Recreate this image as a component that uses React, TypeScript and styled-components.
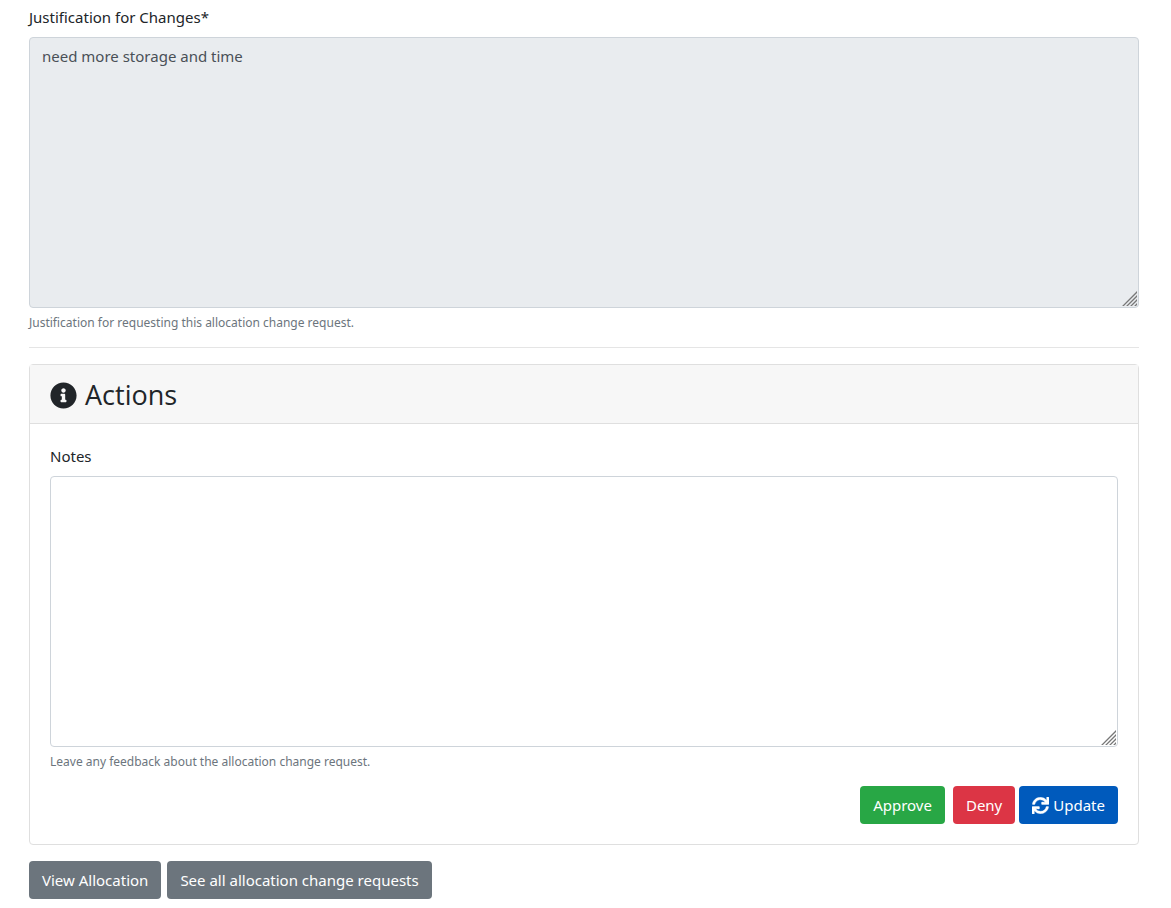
import React from 'react';
import styled, { createGlobalStyle } from 'styled-components';
import { FaInfoCircle, FaSync } from 'react-icons/fa';

const GlobalStyle = createGlobalStyle`
  *, *::before, *::after { box-sizing: border-box; }
  body {
    margin: 0;
    background: #fff;
    color: #212529;
    font-family: "Segoe UI", "Noto Sans", "Open Sans", sans-serif;
    font-size: 15px;
    line-height: 24px;
  }
`;

const Page = styled.main`
  padding: 5px 32px 9px 29px;
`;

const Field = styled.div`
  display: flex;
  flex-direction: column;
`;

const Label = styled.label`
  margin-bottom: 8px;
`;

const AreaWrap = styled.div`
  position: relative;
  display: flex;
`;

const Area = styled.textarea`
  width: 100%;
  height: 271px;
  padding: 6px 12px;
  border: 1px solid #ced4da;
  border-radius: 4px;
  background: #fff;
  color: #495057;
  font: inherit;
  resize: vertical;

  &:read-only { background: #e9ecef; }
  &::-webkit-resizer { display: none; }
`;

const Grip = styled.svg`
  position: absolute;
  right: 2px;
  bottom: 2px;
  pointer-events: none;
`;

const Help = styled.small`
  margin-top: 5px;
  color: #6c757d;
  font-size: 12px;
  line-height: 20px;
`;

const Divider = styled.hr`
  margin: 14px 0 16px;
  border: 0;
  border-top: 1px solid #e5e5e5;
`;

const Card = styled.section`
  border: 1px solid #dfdfdf;
  border-radius: 4px;
`;

const CardHeader = styled.header`
  padding: 13px 20px 11px;
  border-bottom: 1px solid #dfdfdf;
  background: #f7f7f7;
`;

const Title = styled.h2`
  display: flex;
  align-items: center;
  gap: 8px;
  margin: 0;
  font-family: "Segoe UI", "Open Sans", sans-serif;
  font-size: 27px;
  font-weight: 400;
  line-height: 34px;
`;

const CardBody = styled.div`
  padding: 20px;
`;

const Actions = styled.div`
  display: flex;
  justify-content: flex-end;
  gap: 4px;
  margin-top: 14px;
`;

const tones = {
  success: '#28a745',
  danger: '#dc3545',
  primary: '#005abc',
  secondary: '#6c757d',
};

const Button = styled.button<{ $tone: keyof typeof tones; $spaced?: boolean }>`
  display: inline-flex;
  align-items: center;
  gap: 4px;
  margin: 0 ${(p) => (p.$spaced ? '4px' : '0')} 0 0;
  padding: 7px 13px;
  border: 0;
  border-radius: 4px;
  background: ${(p) => tones[p.$tone]};
  color: #fff;
  font: inherit;
  text-decoration: none;
  white-space: nowrap;
  cursor: pointer;
`;

const SyncIcon = styled(FaSync)`
  stroke: currentColor;
  stroke-width: 12px;
`;

const Links = styled.nav`
  display: flex;
  flex-wrap: wrap;
  gap: 6px;
  margin-top: 16px;
`;

type TextFieldProps = {
  id: string;
  label: string;
  help: string;
  value?: string;
  readOnly?: boolean;
};

function TextField({ id, label, help, value, readOnly }: TextFieldProps) {
  return (
    <Field>
      <Label htmlFor={id}>{label}</Label>
      <AreaWrap>
        <Area id={id} defaultValue={value} readOnly={readOnly} aria-describedby={`${id}-help`} />
        <Grip width="15" height="15" viewBox="0 0 15 15" stroke="#777" strokeWidth="1.3" aria-hidden="true">
          <path d="M.5 15.5 15.5.5M4.5 15.5 15.5 4.5M8.5 15.5 15.5 8.5M12.5 15.5 15.5 12.5" />
        </Grip>
      </AreaWrap>
      <Help id={`${id}-help`}>{help}</Help>
    </Field>
  );
}

export default function App() {
  return (
    <>
      <GlobalStyle />
      <Page>
        <TextField
          id="justification"
          label="Justification for Changes*"
          value="need more storage and time"
          help="Justification for requesting this allocation change request."
          readOnly
        />
        <Divider />
        <Card>
          <CardHeader>
            <Title>
              <FaInfoCircle size={27} aria-hidden="true" />
              Actions
            </Title>
          </CardHeader>
          <CardBody>
            <TextField
              id="notes"
              label="Notes"
              help="Leave any feedback about the allocation change request."
            />
            <Actions>
              <Button type="button" $tone="success" $spaced>Approve</Button>
              <Button type="button" $tone="danger">Deny</Button>
              <Button type="button" $tone="primary">
                <SyncIcon size={17} aria-hidden="true" />
                Update
              </Button>
            </Actions>
          </CardBody>
        </Card>
        <Links>
          <Button as="a" href="#allocation" $tone="secondary">View Allocation</Button>
          <Button as="a" href="#requests" $tone="secondary">See all allocation change requests</Button>
        </Links>
      </Page>
    </>
  );
}
